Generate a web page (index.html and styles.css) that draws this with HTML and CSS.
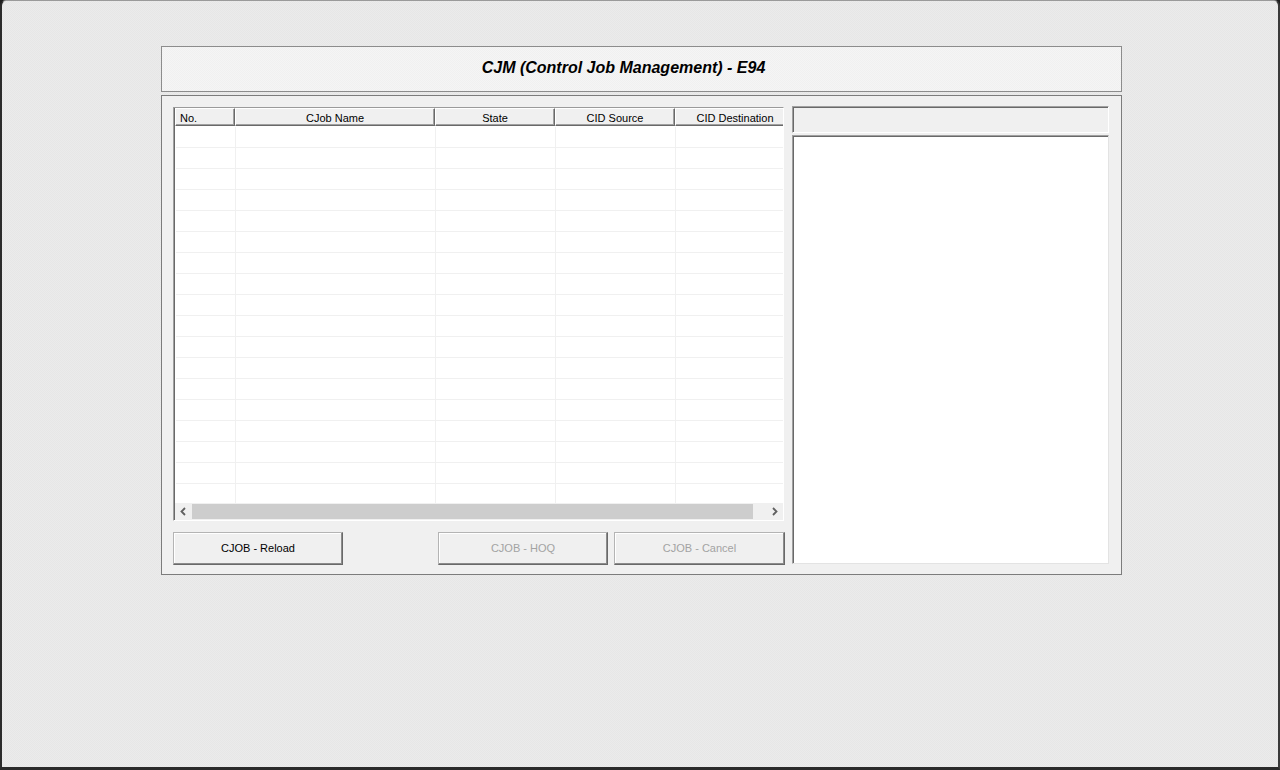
FILE: index.html
```html
<!DOCTYPE html>
<html>
<head>
<meta charset="utf-8">
<link rel="stylesheet" href="styles.css">
</head>
<body>
<div class="window">
  <div class="title-box"><span class="title">CJM (Control Job Management) - E94</span></div>
  <div class="panel">
    <div class="left-col">
      <div class="grid">
        <div class="grid-head">
          <div class="hcell c1 left">No.</div>
          <div class="hcell c2">CJob Name</div>
          <div class="hcell c3">State</div>
          <div class="hcell c4">CID Source</div>
          <div class="hcell c5">CID Destination</div>
        </div>
        <div class="grid-body">
          <div class="row"><div class="cell c1"></div><div class="cell c2"></div><div class="cell c3"></div><div class="cell c4"></div><div class="cell c5"></div></div>
          <div class="row"><div class="cell c1"></div><div class="cell c2"></div><div class="cell c3"></div><div class="cell c4"></div><div class="cell c5"></div></div>
          <div class="row"><div class="cell c1"></div><div class="cell c2"></div><div class="cell c3"></div><div class="cell c4"></div><div class="cell c5"></div></div>
          <div class="row"><div class="cell c1"></div><div class="cell c2"></div><div class="cell c3"></div><div class="cell c4"></div><div class="cell c5"></div></div>
          <div class="row"><div class="cell c1"></div><div class="cell c2"></div><div class="cell c3"></div><div class="cell c4"></div><div class="cell c5"></div></div>
          <div class="row"><div class="cell c1"></div><div class="cell c2"></div><div class="cell c3"></div><div class="cell c4"></div><div class="cell c5"></div></div>
          <div class="row"><div class="cell c1"></div><div class="cell c2"></div><div class="cell c3"></div><div class="cell c4"></div><div class="cell c5"></div></div>
          <div class="row"><div class="cell c1"></div><div class="cell c2"></div><div class="cell c3"></div><div class="cell c4"></div><div class="cell c5"></div></div>
          <div class="row"><div class="cell c1"></div><div class="cell c2"></div><div class="cell c3"></div><div class="cell c4"></div><div class="cell c5"></div></div>
          <div class="row"><div class="cell c1"></div><div class="cell c2"></div><div class="cell c3"></div><div class="cell c4"></div><div class="cell c5"></div></div>
          <div class="row"><div class="cell c1"></div><div class="cell c2"></div><div class="cell c3"></div><div class="cell c4"></div><div class="cell c5"></div></div>
          <div class="row"><div class="cell c1"></div><div class="cell c2"></div><div class="cell c3"></div><div class="cell c4"></div><div class="cell c5"></div></div>
          <div class="row"><div class="cell c1"></div><div class="cell c2"></div><div class="cell c3"></div><div class="cell c4"></div><div class="cell c5"></div></div>
          <div class="row"><div class="cell c1"></div><div class="cell c2"></div><div class="cell c3"></div><div class="cell c4"></div><div class="cell c5"></div></div>
          <div class="row"><div class="cell c1"></div><div class="cell c2"></div><div class="cell c3"></div><div class="cell c4"></div><div class="cell c5"></div></div>
          <div class="row"><div class="cell c1"></div><div class="cell c2"></div><div class="cell c3"></div><div class="cell c4"></div><div class="cell c5"></div></div>
          <div class="row"><div class="cell c1"></div><div class="cell c2"></div><div class="cell c3"></div><div class="cell c4"></div><div class="cell c5"></div></div>
          <div class="row"><div class="cell c1"></div><div class="cell c2"></div><div class="cell c3"></div><div class="cell c4"></div><div class="cell c5"></div></div>
          <div class="row"><div class="cell c1"></div><div class="cell c2"></div><div class="cell c3"></div><div class="cell c4"></div><div class="cell c5"></div></div>
        </div>
        <div class="hscroll">
          <div class="arrow"><svg width="17" height="17" viewBox="0 0 17 17"><polyline points="10,5 6.5,8.5 10,12" fill="none" stroke="#606060" stroke-width="1.8"/></svg></div>
          <div class="track"><div class="thumb"></div></div>
          <div class="arrow"><svg width="17" height="17" viewBox="0 0 17 17"><polyline points="7,5 10.5,8.5 7,12" fill="none" stroke="#606060" stroke-width="1.8"/></svg></div>
        </div>
      </div>
      <div class="buttons">
        <button class="btn btn-reload">CJOB - Reload</button>
        <button class="btn btn-hoq" disabled>CJOB - HOQ</button>
        <button class="btn btn-cancel" disabled>CJOB - Cancel</button>
      </div>
    </div>
    <div class="right-col">
      <div class="right-head"></div>
      <div class="right-list"></div>
    </div>
  </div>
</div>
</body>
</html>
```

FILE: styles.css
```css
* { box-sizing: border-box; }
html, body { margin: 0; padding: 0; }
body {
  width: 1280px;
  height: 770px;
  overflow: hidden;
  font-family: "Liberation Sans", Arial, sans-serif;
  background: #1e1e1e;
}
.window {
  width: 1280px;
  height: 770px;
  border-top: 1px solid #9a9a9a;
  border-left: 2px solid #2b2b2b;
  border-right: 2px solid #3a3a3a;
  border-bottom: 3px solid #2a2a2a;
  border-radius: 6px 6px 0 0;
  background: repeating-conic-gradient(#e6e6e6 0 25%, #ebebeb 0 50%) 0 0 / 2px 2px;
  padding: 45px 156px 0 159px;
}
.title-box {
  height: 46px;
  border: 1px solid #8c8c8c;
  background: repeating-conic-gradient(#f0f0f0 0 25%, #f5f5f5 0 50%) 0 0 / 2px 2px;
  display: flex;
  align-items: center;
  justify-content: center;
  padding-right: 36px;
  padding-bottom: 2px;
  margin-bottom: 3px;
}
.title {
  font-size: 16px;
  font-weight: bold;
  font-style: italic;
  color: #000;
}
.panel {
  height: 480px;
  border: 1px solid #7c7c7c;
  background: #f0f0f0;
  padding: 11px 12px 0 11px;
  display: flex;
  gap: 8px;
}
.left-col {
  width: 611px;
  display: flex;
  flex-direction: column;
}
.grid {
  height: 414px;
  border-style: solid;
  border-width: 1px;
  border-color: #9a9a9a #ffffff #ffffff #a0a0a0;
  display: flex;
  flex-direction: column;
  background: #fff;
  overflow: hidden;
  margin-bottom: 11px;
}
.grid-head {
  display: flex;
  height: 18px;
  flex-shrink: 0;
  border-left: 1px solid #696969;
  background: #f0f0f0;
  overflow: hidden;
}
.hcell {
  height: 18px;
  flex-shrink: 0;
  border-style: solid;
  border-width: 1px;
  border-color: #ffffff #696969 #696969 #ffffff;
  box-shadow: inset -1px -1px 0 #a0a0a0;
  font-size: 11px;
  color: #000;
  display: flex;
  align-items: center;
  justify-content: center;
  white-space: nowrap;
  padding-top: 1px;
}
.hcell.left { justify-content: flex-start; padding-left: 4px; }
.c1 { width: 60px; }
.c2 { width: 200px; }
.c3 { width: 120px; }
.c4 { width: 120px; }
.c5 { width: 120px; }
.grid-body {
  flex: 1;
  overflow: hidden;
  padding-top: 1px;
  padding-left: 1px;
  border-left: 1px solid #696969;
}
.row {
  display: flex;
  height: 21px;
  border-bottom: 1px solid #f0f0f0;
}
.cell {
  flex-shrink: 0;
  height: 100%;
  border-right: 1px solid #f0f0f0;
}
.hscroll {
  height: 17px;
  flex-shrink: 0;
  display: flex;
  background: #f0f0f0;
  border-left: 1px solid #696969;
}
.arrow {
  width: 17px;
  height: 17px;
  flex-shrink: 0;
}
.arrow svg { display: block; }
.track {
  flex: 1;
  padding: 1px 0;
}
.thumb {
  width: 561px;
  height: 15px;
  background: #cdcdcd;
}
.buttons {
  display: flex;
  height: 33px;
  width: 612px;
}
.btn {
  height: 33px;
  margin: 0;
  padding: 0 0 2px 0;
  background: #f0f0f0;
  border-style: solid;
  border-width: 1px;
  border-color: #b4b4b4 #696969 #696969 #b4b4b4;
  box-shadow: inset -1px -1px 0 #8c8c8c, inset 1px 1px 0 #ffffff;
  font-family: "Liberation Sans", Arial, sans-serif;
  font-size: 11px;
  color: #000;
  border-radius: 0;
}
.btn:disabled { color: #a3a3a3; }
.btn-reload { width: 170px; margin-right: 95px; }
.btn-hoq { width: 170px; margin-right: 6px; }
.btn-cancel { width: 171px; }
.right-col {
  width: 317px;
  margin-top: -1px;
  display: flex;
  flex-direction: column;
}
.right-head {
  height: 27px;
  border-style: solid;
  border-width: 1px;
  border-color: #a0a0a0 #ffffff #ffffff #a0a0a0;
  box-shadow: inset 1px 1px 0 #696969;
  background: #f0f0f0;
  margin-bottom: 2px;
}
.right-list {
  height: 429px;
  border-style: solid;
  border-width: 1px;
  border-color: #a0a0a0 #e3e3e3 #e3e3e3 #a0a0a0;
  box-shadow: inset 1px 1px 0 #696969;
  background: #ffffff;
}
```
